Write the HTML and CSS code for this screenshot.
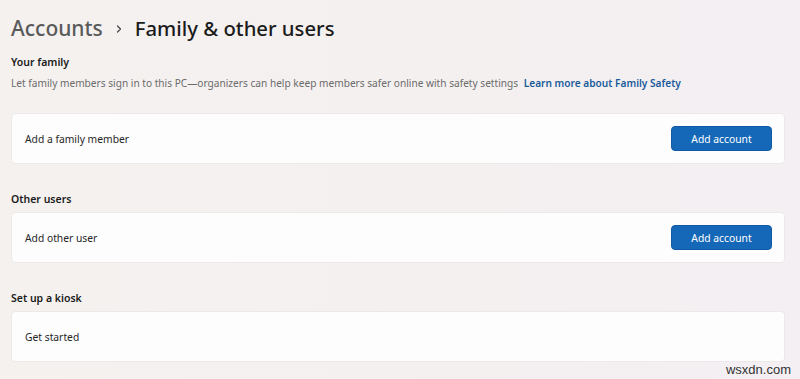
FILE: index.html
```html
<!DOCTYPE html>
<html lang="en">
<head>
    <meta charset="UTF-8">
    <meta name="viewport" content="width=device-width, initial-scale=1.0">
    <title>Family &amp; other users - Settings</title>
    <link rel="stylesheet" href="styles.css">
</head>
<body>
    <div class="page">
        <h1 class="breadcrumb">
            <span class="crumb-parent">Accounts</span>
            <svg class="crumb-chevron" width="10" height="10" viewBox="0 0 10 10">
                <path d="M3.5 2 L6.5 5 L3.5 8" fill="none" stroke="#444" stroke-width="1.2" stroke-linecap="round" stroke-linejoin="round"/>
            </svg>
            <span class="crumb-current">Family &amp; other users</span>
        </h1>

        <section class="group">
            <h2 class="group-title">Your family</h2>
            <p class="group-desc">
                Let family members sign in to this PC—organizers can help keep members safer online with safety settings
                <a class="link" href="#">Learn more about Family Safety</a>
            </p>
            <div class="card">
                <span class="card-label">Add a family member</span>
                <button class="btn-primary">Add account</button>
            </div>
        </section>

        <section class="group">
            <h2 class="group-title">Other users</h2>
            <div class="card">
                <span class="card-label">Add other user</span>
                <button class="btn-primary">Add account</button>
            </div>
        </section>

        <section class="group">
            <h2 class="group-title">Set up a kiosk</h2>
            <div class="card">
                <span class="card-label">Get started</span>
            </div>
        </section>
    </div>

    <div class="watermark">wsxdn.com</div>
</body>
</html>
```

FILE: styles.css
```css
* {
    margin: 0;
    padding: 0;
    box-sizing: border-box;
}

body {
    font-family: "Noto Sans", "Open Sans", sans-serif;
    background: linear-gradient(90deg, #f5f1ef 0%, #f4f0f0 60%, #f3eff3 100%);
    color: #1b1b1b;
    height: 100vh;
    overflow: hidden;
    position: relative;
}

.page {
    padding: 12px 15px 0 11px;
}

.breadcrumb {
    display: flex;
    align-items: center;
    font-weight: 500;
    height: 32px;
    margin-bottom: 10px;
}

.crumb-parent {
    font-size: 21px;
    color: #5a5a5a;
}

.crumb-chevron {
    margin: 2px 11px 0 11px;
}

.crumb-current {
    font-size: 20.3px;
    color: #1b1b1b;
}

.group {
    margin-bottom: 27px;
}

.group-title {
    font-size: 10.5px;
    font-weight: 600;
    line-height: 16px;
    margin-bottom: 5px;
}

.group-desc {
    font-size: 10.15px;
    color: #6b6b6b;
    line-height: 16px;
    margin-top: 3px;
    margin-bottom: 22px;
}

.link {
    color: #1a5b9a;
    font-weight: 600;
    text-decoration: none;
    margin-left: 3px;
}

.card {
    display: flex;
    align-items: center;
    justify-content: space-between;
    height: 51px;
    padding: 0 12px 0 13px;
    background: #fdfdfd;
    border: 1px solid #ede9e9;
    border-radius: 4px;
}

.card-label {
    font-size: 10.3px;
    color: #262626;
}

.btn-primary {
    width: 101px;
    height: 25px;
    background: #1568b8;
    color: #ffffff;
    border: 1px solid #105aa3;
    border-radius: 4px;
    font-family: inherit;
    font-size: 10.3px;
}

.watermark {
    position: absolute;
    right: 9px;
    bottom: 2px;
    font-family: "Liberation Sans", sans-serif;
    font-size: 13px;
    color: #333;
}
```
